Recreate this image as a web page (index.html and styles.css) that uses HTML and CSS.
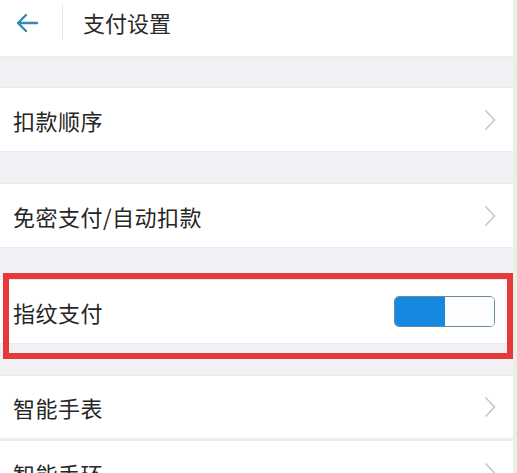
FILE: index.html
```html
<!DOCTYPE html>
<html lang="zh-CN">
<head>
<meta charset="utf-8">
<link rel="stylesheet" href="styles.css">
</head>
<body>
<div class="screen">
  <header class="topbar">
    <svg class="back" width="24" height="20" viewBox="0 0 24 20"><path d="M22 10H3M11 2L3 10l8 8" fill="none" stroke="#2f8cb3" stroke-width="2.4" stroke-linecap="round" stroke-linejoin="round"/></svg>
    <span class="divider"></span>
    <h1 class="title">支付设置</h1>
  </header>
  <div class="gap first"></div>
  <div class="row"><span class="label">扣款顺序</span><svg class="chev" width="12" height="22" viewBox="0 0 12 22"><path d="M1.5 1.5L10.5 11L1.5 20.5" fill="none" stroke="#c8c8cc" stroke-width="1.6"/></svg></div>
  <div class="gap"></div>
  <div class="row"><span class="label">免密支付/自动扣款</span><svg class="chev" width="12" height="22" viewBox="0 0 12 22"><path d="M1.5 1.5L10.5 11L1.5 20.5" fill="none" stroke="#c8c8cc" stroke-width="1.6"/></svg></div>
  <div class="gap"></div>
  <div class="row highlight"><span class="label">指纹支付</span><span class="toggle"><span class="on"></span><span class="off"></span></span></div>
  <div class="gap"></div>
  <div class="row line"><span class="label">智能手表</span><svg class="chev" width="12" height="22" viewBox="0 0 12 22"><path d="M1.5 1.5L10.5 11L1.5 20.5" fill="none" stroke="#c8c8cc" stroke-width="1.6"/></svg></div>
  <div class="row"><span class="label">智能手环</span><svg class="chev" width="12" height="22" viewBox="0 0 12 22"><path d="M1.5 1.5L10.5 11L1.5 20.5" fill="none" stroke="#c8c8cc" stroke-width="1.6"/></svg></div>
</div>
</body>
</html>
```
FILE: styles.css
```css
html, body { margin: 0; padding: 0; background: #fff; }
body { width: 517px; height: 473px; overflow: hidden; font-family: "Noto Sans CJK SC", "Noto Sans", sans-serif; color: #262626; }
.screen { width: 513px; border-right: 4px solid #e4f1e4; background: #f1f1f5; min-height: 473px; }
.topbar { height: 57px; background: #fff; display: flex; align-items: center; border-bottom: 1px solid #ececf0; box-sizing: border-box; }
.back { margin-left: 15px; margin-top: -10px; }
.divider { width: 1px; height: 36px; background: #e6e6ea; margin-left: 23px; margin-top: -12px; }
.title { margin: 0 0 0 20px; font-size: 22px; font-weight: 400; margin-top: -12px; color: #2a2a2a; }
.gap { height: 31px; }
.gap.first { height: 30px; }
.row { height: 65px; background: #fff; display: flex; align-items: center; justify-content: space-between; padding: 0 17px 0 13px; border-top: 1px solid #ebebef; border-bottom: 1px solid #ebebef; box-sizing: border-box; }
.row.line { border-bottom: 2px solid #ededf1; }
.label { font-size: 22px; letter-spacing: 0.5px; }
.chev { display: block; }
.highlight { position: relative; }
.highlight::after { content: ""; position: absolute; left: 3px; right: 0; top: -7px; bottom: -16px; border: 6px solid #e5393b; pointer-events: none; }
.toggle { width: 101px; height: 31px; display: flex; border-radius: 5px; overflow: hidden; border: 1.5px solid #6a8a9a; box-sizing: border-box; margin-right: 1px; }
.toggle .on { flex: 1; background: #1688e0; }
.toggle .off { flex: 1; background: #fcfeff; }
```
